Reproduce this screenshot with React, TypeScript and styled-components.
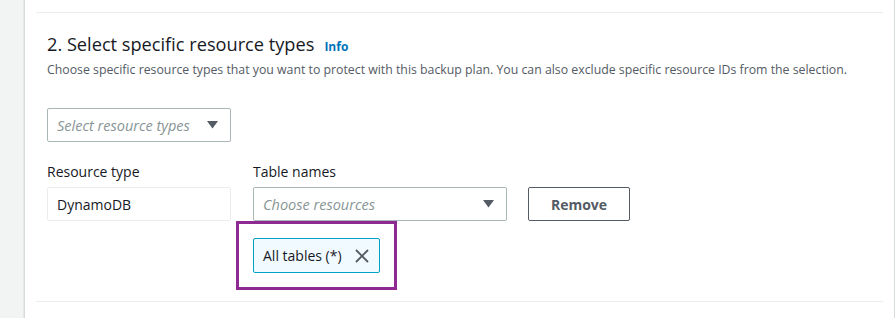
import React, { FC } from 'react';
import styled, { createGlobalStyle } from 'styled-components';

/**
 * * global
 */
const GlobalStyle = createGlobalStyle`
    html, body {
        margin: 0;
        padding: 0;
        background: #f2f3f3;
        font-family: "Open Sans", "Noto Sans", sans-serif;
        color: #16191f;
    }
`;

/**
 * * styled-components
 */
const Page = styled.div`
    display: flex;
    height: 318px;
    padding-left: 24px;
    overflow: hidden;
`;

const Panel = styled.main`
    width: 848px;
    background: #ffffff;
    border-left: 1px solid #d5dbdb;
    border-right: 1px solid #d5dbdb;
    box-shadow: -1px 0 0 #e6e9e9, 1px 0 0 #e6e9e9;
    padding: 12px 11px 0 11px;
`;

const Section = styled.section`
    border-top: 1px solid #eaeded;
    border-bottom: 1px solid #eaeded;
    padding: 19px 0 11px 11px;
`;

const Heading = styled.h2`
    margin: 0;
    font-size: 18.2px;
    font-weight: 400;
    line-height: 24px;
    display: flex;
    align-items: baseline;
    gap: 10px;
`;

const InfoLink = styled.a`
    font-size: 12px;
    font-weight: 700;
    color: #0073bb;
    text-decoration: none;
`;

const Description = styled.p`
    margin: 3px 0 0 0;
    font-size: 12.3px;
    line-height: 16px;
    color: #545b64;
    white-space: nowrap;
`;

const Field = styled.div<{ $width: number; $readOnly?: boolean }>`
    width: ${p => p.$width}px;
    height: 34px;
    box-sizing: border-box;
    display: flex;
    align-items: center;
    justify-content: space-between;
    padding: 0 12px 0 9px;
    border: 1px solid ${p => p.$readOnly ? '#eaeded' : '#aab7b8'};
    border-radius: 2px;
    font-size: 14px;
    background: #ffffff;
`;

const Placeholder = styled.span`
    font-style: italic;
    color: #879596;
    font-size: 14.5px;
`;

const Value = styled.span`
    color: #16191f;
`;

const TopSelect = styled.div`
    margin-top: 30px;
`;

const Row = styled.div`
    display: flex;
    align-items: flex-start;
    margin-top: 20px;
`;

const Column = styled.div<{ $gap: number }>`
    display: flex;
    flex-direction: column;
    margin-right: ${p => p.$gap}px;
`;

const Label = styled.label`
    font-size: 14px;
    line-height: 20px;
    margin-bottom: 5px;
`;

const RemoveButton = styled.button`
    margin-top: 25px;
    width: 102px;
    height: 34px;
    border: 1px solid #545b64;
    border-radius: 2px;
    background: #ffffff;
    font-family: inherit;
    font-size: 14px;
    font-weight: 700;
    color: #545b64;
`;

const Highlight = styled.div`
    margin-left: -17px;
    width: 161px;
    box-sizing: border-box;
    border: 3px solid #8e2a91;
    padding: 14px;
`;

const Token = styled.div`
    display: inline-flex;
    align-items: center;
    gap: 13px;
    height: 35px;
    box-sizing: border-box;
    padding: 0 10px 0 9px;
    border: 1px solid #00a1c9;
    border-radius: 2px;
    background: #f1faff;
    font-size: 14px;
    color: #16191f;
    white-space: nowrap;
`;

const Caret: FC = () => (
    <svg width="11" height="8" viewBox="0 0 11 8">
        <path d="M0 0 H11 L5.5 7.5 Z" fill="#545b64" />
    </svg>
);

const Close: FC = () => (
    <svg width="14" height="14" viewBox="0 0 14 14">
        <path d="M1 1 L13 13 M13 1 L1 13" stroke="#545b64" strokeWidth="1.8" />
    </svg>
);

/**
 * * React Component App
 */
const App: FC = () => {
    return (
        <>
            <GlobalStyle />
            <Page>
                <Panel>
                    <Section>
                        <Heading>
                            2. Select specific resource types
                            <InfoLink href="#">Info</InfoLink>
                        </Heading>
                        <Description>
                            Choose specific resource types that you want to protect with this backup plan. You can also exclude specific resource IDs from the selection.
                        </Description>
                        <TopSelect>
                            <Field $width={184}>
                                <Placeholder>Select resource types</Placeholder>
                                <Caret />
                            </Field>
                        </TopSelect>
                        <Row>
                            <Column $gap={22}>
                                <Label>Resource type</Label>
                                <Field $width={184} $readOnly>
                                    <Value>DynamoDB</Value>
                                </Field>
                            </Column>
                            <Column $gap={21}>
                                <Label>Table names</Label>
                                <Field $width={254}>
                                    <Placeholder>Choose resources</Placeholder>
                                    <Caret />
                                </Field>
                                <Highlight>
                                    <Token>
                                        All tables (*)
                                        <Close />
                                    </Token>
                                </Highlight>
                            </Column>
                            <RemoveButton>Remove</RemoveButton>
                        </Row>
                    </Section>
                </Panel>
            </Page>
        </>
    );
};

export default App;
